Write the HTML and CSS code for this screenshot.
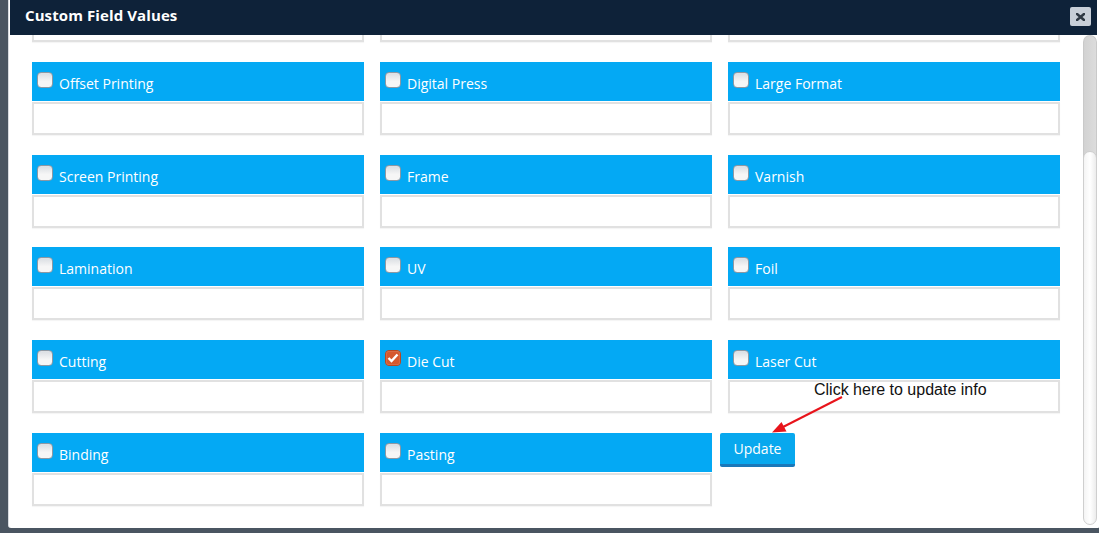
FILE: index.html
```html
<!DOCTYPE html>
<html>
<head>
<meta charset="utf-8">
<link rel="stylesheet" href="styles.css">
</head>
<body>
<div class="page">
  <div class="modal">
    <div class="modal-header">
      <span class="modal-title">Custom Field Values</span>
      <button class="close-btn" aria-label="Close">
        <svg width="9" height="8" viewBox="0 0 9 8"><path d="M1 1 L8 7 M8 1 L1 7" stroke="#2f3944" stroke-width="2.6" stroke-linecap="square"/></svg>
      </button>
    </div>
    <div class="modal-body">
      <div class="content">
        <div class="grid">
          <div class="field-input"></div>
          <div class="field-input"></div>
          <div class="field-input"></div>

          <div class="field"><div class="field-head"><span class="cb"></span><span class="label">Offset Printing</span></div><div class="field-input"></div></div>
          <div class="field"><div class="field-head"><span class="cb"></span><span class="label">Digital Press</span></div><div class="field-input"></div></div>
          <div class="field"><div class="field-head"><span class="cb"></span><span class="label">Large Format</span></div><div class="field-input"></div></div>

          <div class="field"><div class="field-head"><span class="cb"></span><span class="label">Screen Printing</span></div><div class="field-input"></div></div>
          <div class="field"><div class="field-head"><span class="cb"></span><span class="label">Frame</span></div><div class="field-input"></div></div>
          <div class="field"><div class="field-head"><span class="cb"></span><span class="label">Varnish</span></div><div class="field-input"></div></div>

          <div class="field"><div class="field-head"><span class="cb"></span><span class="label">Lamination</span></div><div class="field-input"></div></div>
          <div class="field"><div class="field-head"><span class="cb"></span><span class="label">UV</span></div><div class="field-input"></div></div>
          <div class="field"><div class="field-head"><span class="cb"></span><span class="label">Foil</span></div><div class="field-input"></div></div>

          <div class="field"><div class="field-head"><span class="cb"></span><span class="label">Cutting</span></div><div class="field-input"></div></div>
          <div class="field"><div class="field-head"><span class="cb checked"><svg width="12" height="10" viewBox="0 0 12 10"><path d="M1.5 5 L4.5 8 L10.5 1.5" fill="none" stroke="#fff" stroke-width="2.4"/></svg></span><span class="label">Die Cut</span></div><div class="field-input"></div></div>
          <div class="field"><div class="field-head"><span class="cb"></span><span class="label">Laser Cut</span></div><div class="field-input"></div></div>

          <div class="field"><div class="field-head"><span class="cb"></span><span class="label">Binding</span></div><div class="field-input"></div></div>
          <div class="field"><div class="field-head"><span class="cb"></span><span class="label">Pasting</span></div><div class="field-input"></div></div>
          <div class="action"><button class="update-btn">Update</button></div>
        </div>
      </div>
      <div class="scrollbar">
        <div class="thumb"></div>
        <div class="track"></div>
      </div>
    </div>
    <div class="note">Click here to update info</div>
    <svg class="arrow" width="95" height="50" viewBox="0 0 95 50">
      <line x1="90" y1="7" x2="31" y2="37" stroke="#e8141b" stroke-width="2"/>
      <polygon points="20,42.5 34.5,41.5 29.5,32" fill="#e8141b"/>
    </svg>
  </div>
  <div class="behind">Vat Sum</div>
</div>
</body>
</html>
```

FILE: styles.css
```css
html, body {
  margin: 0;
  padding: 0;
  height: 100%;
  overflow: hidden;
}
body {
  background: #4a5561;
  font-family: "Open Sans", "DejaVu Sans", sans-serif;
}
.page {
  width: 1099px;
  height: 533px;
  overflow: hidden;
}
.modal {
  position: relative;
  margin-left: 8px;
  width: 1092px;
  height: 528px;
  background: #fff;
  border-left: 1px solid #d7dbe0;
  box-sizing: border-box;
  display: flex;
  flex-direction: column;
  border-radius: 0 0 3px 3px;
}
.modal-header {
  height: 35px;
  margin: 0 3px 0 1px;
  background: #0e2239;
  display: flex;
  align-items: flex-start;
  justify-content: space-between;
  flex: none;
}
.modal-title {
  color: #fff;
  font-weight: 700;
  font-size: 15px;
  line-height: 20px;
  padding: 5px 0 0 15px;
  letter-spacing: 0.1px;
}
.close-btn {
  margin: 7px 6px 0 0;
  width: 21px;
  height: 19px;
  padding: 0;
  border: none;
  border-radius: 2px;
  background: #c8cfd8;
  display: flex;
  align-items: center;
  justify-content: center;
}
.close-btn svg { display: block; }
.modal-body {
  flex: 1;
  display: flex;
  min-height: 0;
}
.content {
  flex: 1;
  overflow: hidden;
  padding-left: 23px;
}
.grid {
  margin-top: -27px;
  display: grid;
  grid-template-columns: repeat(3, 332px);
  column-gap: 16px;
  row-gap: 19.75px;
}
.field {
  display: flex;
  flex-direction: column;
}
.field-head {
  height: 39px;
  background: #04a9f4;
  display: flex;
  align-items: flex-start;
  padding: 10px 0 0 5px;
  box-sizing: border-box;
}
.cb {
  width: 16px;
  height: 16px;
  box-sizing: border-box;
  border: 1px solid #8d98a3;
  border-radius: 4px;
  background: linear-gradient(#d9dde2, #f6f6f6 60%);
  box-shadow: inset 0 0 1px #fff;
  display: flex;
  align-items: center;
  justify-content: center;
  flex: none;
}
.cb.checked {
  background: #d5582e;
  border-color: #b9461f;
}
.label {
  color: #fff;
  font-size: 14px;
  line-height: 20px;
  margin: 2px 0 0 6px;
}
.field-input {
  height: 33px;
  margin-top: 1px;
  border: 2px solid #e1e1e1;
  box-sizing: border-box;
  background: #fff;
  box-shadow: 0 1px 1px rgba(0,0,0,0.04);
}
.action {
  margin-left: -8px;
}
.update-btn {
  width: 75px;
  height: 34px;
  margin-top: 0;
  border: none;
  border-bottom: 3px solid #1b78b9;
  border-radius: 2px;
  background: #08a8ee;
  color: #fff;
  font-family: "Open Sans", "DejaVu Sans", sans-serif;
  font-size: 14px;
  line-height: 20px;
  padding: 1px 0 0 0;
  box-sizing: border-box;
}
.scrollbar {
  width: 14px;
  margin: 0 3px 3px 0;
  display: flex;
  flex-direction: column;
  flex: none;
}
.thumb {
  height: 124px;
  box-sizing: border-box;
  border: 1px solid #c9c9c9;
  border-bottom: none;
  border-radius: 7px 7px 0 0;
  background: linear-gradient(90deg, #d2d2d2, #dcdcdc);
}
.track {
  flex: 1;
  margin-top: -8px;
  box-sizing: border-box;
  border: 1px solid #cfcfcf;
  border-radius: 7px;
  background: linear-gradient(90deg, #f4f4f4, #ffffff 50%, #ececec);
}
.note {
  position: absolute;
  left: 805px;
  top: 381px;
  font-family: "Liberation Sans", Arial, sans-serif;
  font-size: 16px;
  line-height: 18px;
  color: #111;
}
.arrow {
  position: absolute;
  left: 743px;
  top: 390px;
}
.behind {
  text-align: right;
  padding-right: 14px;
  margin-top: 1px;
  font-size: 13px;
  font-weight: 700;
  color: #1c2836;
  line-height: 16px;
}
```
